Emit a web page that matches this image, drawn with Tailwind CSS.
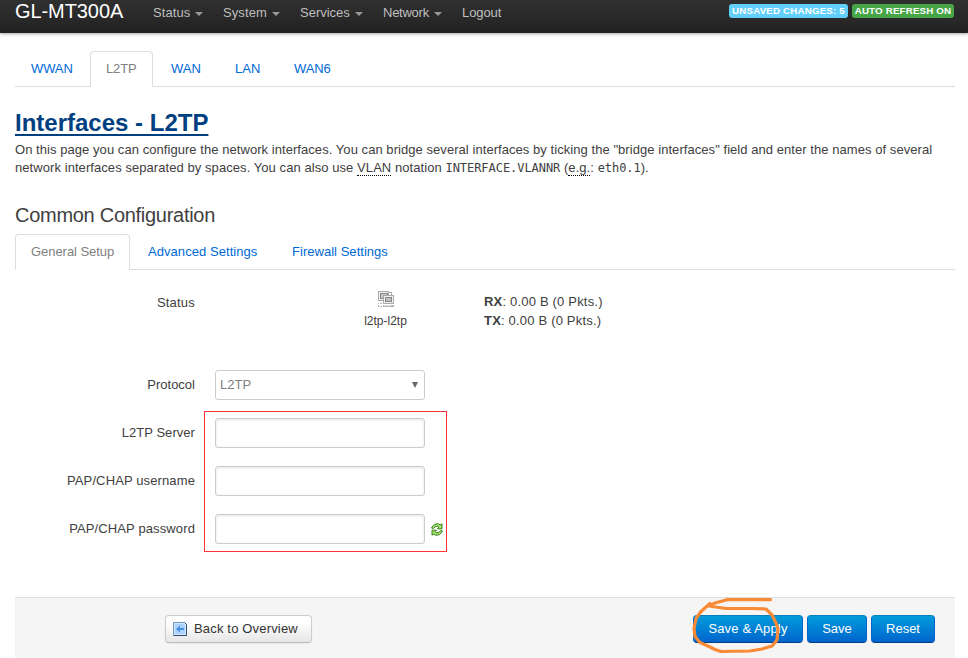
<!DOCTYPE html>
<html lang="en">
<head>
<meta charset="utf-8">
<title>GL-MT300A - Interfaces</title>
<script src="https://cdn.jsdelivr.net/npm/@tailwindcss/browser@4"></script>
</head>
<body class="h-[658px] overflow-hidden bg-white font-['Liberation_Sans',Arial,sans-serif] text-[13px] leading-[18px] text-[#404040]">
<header class="relative flex h-[33px] items-start bg-linear-to-b from-[#303030] to-[#222] pl-[15px] pr-[14px] text-[#bfbfbf] shadow-[0_1px_3px_rgba(0,0,0,0.35)]">
  <a class="w-[138px] text-[20px] leading-[22px] tracking-[-0.08px] whitespace-nowrap text-white">GL-MT300A</a>
  <nav class="flex pt-[4px]">
    <a class="flex w-[70px] items-center gap-[5px]"><span class="tracking-[0.1px]">Status</span><i class="mt-px border-x-4 border-t-4 border-x-transparent border-t-[#999]"></i></a>
    <a class="flex w-[77px] items-center gap-[5px]"><span class="tracking-[0.1px]">System</span><i class="mt-px border-x-4 border-t-4 border-x-transparent border-t-[#999]"></i></a>
    <a class="flex w-[83px] items-center gap-[5px]"><span>Services</span><i class="mt-px border-x-4 border-t-4 border-x-transparent border-t-[#999]"></i></a>
    <a class="flex w-[79px] items-center gap-[5px]"><span class="tracking-[-0.25px]">Network</span><i class="mt-px border-x-4 border-t-4 border-x-transparent border-t-[#999]"></i></a>
    <a class="tracking-[-0.1px]">Logout</a>
  </nav>
  <div class="ml-auto flex gap-1 pt-[4px] text-[9.75px] leading-[14px] font-bold tracking-[0.17px] whitespace-nowrap text-white">
    <a class="h-[14px] w-[119px] rounded-[3px] bg-[#62cffc] text-center">UNSAVED CHANGES: 5</a>
    <a class="h-[14px] w-[102px] rounded-[3px] bg-[#46a546] text-center">AUTO REFRESH ON</a>
  </div>
</header>
<main class="pl-[15px]">
  <nav class="mt-[18px] flex h-[36px] w-[940px] border-b border-[#ddd] leading-[35px] text-[#0069d6]">
    <a class="w-[75px] pl-4 tracking-[-0.1px]">WWAN</a>
    <a class="h-[36px] w-[63px] rounded-t-[4px] border border-b-0 border-[#ddd] bg-white pl-[15px] leading-[34px] tracking-[-0.15px] text-[#808080]">L2TP</a>
    <a class="w-[82px] pl-[18px]">WAN</a>
    <a class="w-[59px]">LAN</a>
    <a class="tracking-[-0.15px]">WAN6</a>
  </nav>
  <h2 class="mt-[18px] h-[36px] text-[24px] leading-[36px] font-bold text-[#004080]"><a class="underline decoration-2 underline-offset-[3px]">Interfaces - L2TP</a></h2>
  <p class="h-[37px] w-[940px] tracking-[0.056px] whitespace-nowrap"><span>On this page you can configure the network interfaces. You can bridge several interfaces by ticking the "bridge interfaces" field and enter the names of several</span><br><span class="tracking-[0.068px]">network interfaces separated by spaces. You can also use <span class="border-b border-dotted border-black">VLAN</span> notation</span> <code class="font-['DejaVu_Sans_Mono',monospace] text-[12px] tracking-[-0.05px]">INTERFACE.VLANNR</code> (<span class="border-b border-dotted border-black">e.g.</span>: <code class="font-['DejaVu_Sans_Mono',monospace] text-[12px] tracking-[-0.05px]">eth0.1</code>).</p>
  <h3 class="mt-[19px] h-[36px] text-[20px] leading-[36px] tracking-[-0.28px]">Common Configuration</h3>
  <nav class="mt-[1px] flex h-[36px] w-[940px] border-b border-[#ddd] leading-[35px] whitespace-nowrap text-[#0069d6]">
    <a class="h-[36px] w-[115px] rounded-t-[4px] border border-b-0 border-[#ddd] bg-white pl-[15px] leading-[34px] tracking-[-0.05px] text-[#808080]">General Setup</a>
    <a class="w-[162px] pl-[18px] tracking-[0.06px]">Advanced Settings</a>
    <a class="tracking-[0.03px]">Firewall Settings</a>
  </nav>
  <section class="flex h-[100px] pt-[21px]">
    <span class="w-[180px] pt-[3px] text-right tracking-[0.2px]">Status</span>
    <div class="ml-[141px] flex w-[100px] flex-col items-center text-[12px]">
      <svg width="16" height="16" viewBox="0 0 16 16" shape-rendering="crispEdges"><path fill="#aaa" d="M0 0h11v10H0z"/><path fill="#f1f1f1" d="M1 1h9v8H1z"/><path fill="#8a8a8a" d="M2 2h8v6H2z"/><path fill="#c4c4c4" d="M3 3h6v4H3z"/><path fill="#aaa" d="M11 1h3v4h-1V2h-2zM5 4h11v9H5z"/><path fill="#f1f1f1" d="M6 5h9v7H6z"/><path fill="#858585" d="M7 6h7v5H7z"/><path fill="#bfbfbf" d="M8 7h5v3H8z"/><path fill="#b5b5b5" d="M0 12h1v1H0zM2 12h2v1H2zM0 14h1v2H0zM2 15h2v1H2zM5 14h11v2H5z"/><path fill="#e5e5e5" d="M6 14h7v1H6z"/></svg>
      <span class="mt-[5px] mr-px">l2tp-l2tp</span>
    </div>
    <p class="ml-[48px] pt-[1px] leading-[19px] tracking-[0.19px]"><b>RX</b>: 0.00 B (0 Pkts.)<br><b>TX</b>: 0.00 B (0 Pkts.)</p>
  </section>
  <form class="relative">
    <label class="flex h-[48px]"><span class="w-[180px] pt-[6px] text-right">Protocol</span><span class="ml-[20px] flex h-[30px] w-[210px] items-center justify-between rounded-[3px] border border-[#ccc] pr-[6px] pl-[4px] text-[#808080]"><span>L2TP</span><i class="border-x-[3.5px] border-t-[6px] border-x-transparent border-t-[#666]"></i></span></label>
    <label class="flex h-[48px]"><span class="w-[180px] pt-[6px] text-right tracking-[0.05px]">L2TP Server</span><input class="ml-[20px] h-[30px] w-[210px] rounded-[3px] border border-[#ccc] shadow-[inset_0_1px_3px_rgba(0,0,0,0.1)]"></label>
    <label class="flex h-[48px]"><span class="w-[180px] pt-[6px] text-right tracking-[0.12px]">PAP/CHAP username</span><input class="ml-[20px] h-[30px] w-[210px] rounded-[3px] border border-[#ccc] shadow-[inset_0_1px_3px_rgba(0,0,0,0.1)]"></label>
    <label class="flex h-[48px]"><span class="w-[180px] pt-[6px] text-right tracking-[0.12px]">PAP/CHAP password</span><input class="ml-[20px] h-[30px] w-[210px] rounded-[3px] border border-[#ccc] shadow-[inset_0_1px_3px_rgba(0,0,0,0.1)]">
      <svg class="mt-[9px] ml-[6px]" width="12" height="13" viewBox="0 0 12 13"><path fill="#a5e070" stroke="#38801b" stroke-linejoin="round" d="M.8 5.2V4L3.6 1.3 7.5.7 9 2l2-1.2v5H6.4L8 4.2 6.5 3.3 4 3.7 2.5 5.4zM11.2 7.8V9l-2.8 2.7-3.9.6L3 11l-2 1.2v-5h4.6L4 8.8l1.5.9L8 9.3l1.5-1.7z"/></svg></label>
    <span class="pointer-events-none absolute top-[41px] left-[189px] h-[141px] w-[243px] border border-[#f33]"></span>
  </form>
  <footer class="mt-[35px] flex h-[61px] w-[940px] border-t border-[#ddd] bg-[#f5f5f5] pt-[17px] pr-[20px] pl-[150px]">
    <button class="flex h-[28px] w-[147px] items-center rounded-[4px] border border-[#ccc] border-b-[#bbb] bg-linear-to-b from-white from-25% to-[#e6e6e6] pl-[7px] whitespace-nowrap text-[#333] shadow-[0_1px_2px_rgba(0,0,0,0.05)]">
      <svg width="14" height="14" viewBox="0 0 14 14"><path fill="#d5e9fc" stroke="#6994c4" d="M.5.5h11l2 2v11H.5z"/><path fill="none" stroke="#314a70" d="M13.5 2.5v11H1M11.5.5l2 2"/><path fill="#a9d1fb" d="M2 2h9l1 1v9H2z"/><path fill="#4b8ee0" d="M3 7l4-3.5V6h4v2H7v2.5z"/></svg>
      <span class="-mt-px ml-[7px] tracking-[0.17px]">Back to Overview</span>
    </button>
    <div class="relative ml-auto flex gap-1 text-white [text-shadow:0_-1px_0_rgba(0,0,0,0.25)]">
      <button class="h-[28px] w-[110px] rounded-[4px] border border-[#0064cd] border-t-[#0880be] border-b-[#003f81] bg-linear-to-b from-[#049cdb] to-[#0064cd] pb-px tracking-[0.15px]">Save &amp; Apply</button>
      <button class="h-[28px] w-[60px] rounded-[4px] border border-[#0064cd] border-t-[#0880be] border-b-[#003f81] bg-linear-to-b from-[#049cdb] to-[#0064cd] pb-px">Save</button>
      <button class="h-[28px] w-[64px] rounded-[4px] border border-[#0064cd] border-t-[#0880be] border-b-[#003f81] bg-linear-to-b from-[#049cdb] to-[#0064cd] pb-px">Reset</button>
      <svg class="pointer-events-none absolute top-[-30px] left-[-23px]" width="120" height="73" viewBox="0 0 120 73" fill="none" stroke="#f98a36" stroke-width="3.2" stroke-linecap="round" stroke-linejoin="round"><path d="M100.5 14.7H57L45 18l-6 3 7 1 10 1.5h26L96 24l6 6 4 8 2 6-1 11-5 6-10 3-12 2-29 .5-6-2-6-3-9-4-5-6-1-8 2-10 5-7 9-8"/></svg>
    </div>
  </footer>
</main>
</body>
</html>
